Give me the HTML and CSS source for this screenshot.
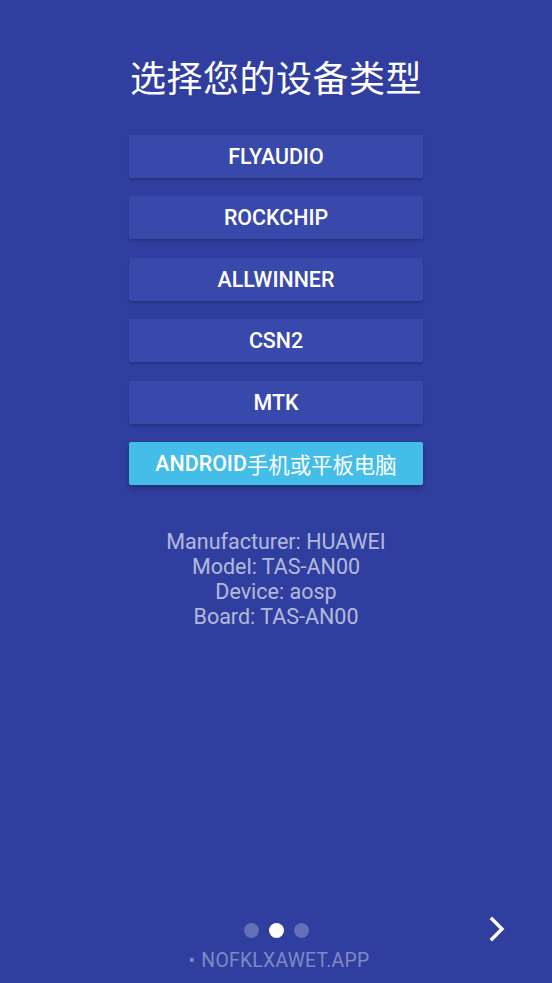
FILE: index.html
```html
<!DOCTYPE html>
<html>
<head>
<meta charset="utf-8">
<link rel="stylesheet" href="styles.css">
</head>
<body>
<div class="page">
  <h1 class="title">选择您的设备类型</h1>
  <div class="choices">
    <div class="btn">FLYAUDIO</div>
    <div class="btn">ROCKCHIP</div>
    <div class="btn">ALLWINNER</div>
    <div class="btn">CSN2</div>
    <div class="btn">MTK</div>
    <div class="btn btn-selected">ANDROID<span class="cjk">手机或平板电脑</span></div>
  </div>
  <div class="info">
    <div>Manufacturer: HUAWEI</div>
    <div>Model: TAS-AN00</div>
    <div>Device: aosp</div>
    <div>Board: TAS-AN00</div>
  </div>
  <div class="footer">
    <div class="nav">
      <div class="dots">
        <span class="dot"></span>
        <span class="dot dot-active"></span>
        <span class="dot"></span>
      </div>
      <svg class="next" width="24" height="28" viewBox="0 0 24 28">
        <path d="M6 4 L16 14 L6 24" fill="none" stroke="#fff" stroke-width="3.4" stroke-linecap="square" stroke-linejoin="miter"/>
      </svg>
    </div>
    <div class="site"><span class="bullet">•</span>NOFKLXAWET.APP</div>
  </div>
</div>
</body>
</html>
```

FILE: styles.css
```css
html, body {
  margin: 0;
  padding: 0;
  background: #303f9f;
}
.page {
  width: 552px;
  height: 983px;
  display: flex;
  flex-direction: column;
  align-items: center;
  font-family: Roboto, "Noto Sans CJK SC", sans-serif;
  color: #fff;
  box-sizing: border-box;
}
.title {
  margin: 55px 0 0;
  font-family: "Noto Sans CJK SC", sans-serif;
  font-weight: 400;
  font-size: 36px;
  line-height: 43px;
  letter-spacing: 0.5px;
}
.choices {
  margin-top: 37px;
  display: flex;
  flex-direction: column;
  gap: 18.4px;
}
.btn {
  width: 294px;
  height: 43px;
  background: #3949ab;
  border-radius: 2px;
  box-shadow: 0 2px 3px rgba(0, 0, 0, 0.22);
  display: flex;
  align-items: center;
  justify-content: center;
  font-family: Roboto, "Noto Sans CJK SC", sans-serif;
  font-weight: 500;
  font-size: 21.4px;
}
.btn-selected {
  background: #44bde8;
  box-shadow: 0 3px 6px rgba(0, 0, 0, 0.3);
}
.cjk {
  font-family: "Noto Sans CJK SC", sans-serif;
  font-weight: 400;
}
.info {
  margin-top: 44px;
  text-align: center;
  font-size: 21.5px;
  line-height: 25px;
  color: rgba(255, 255, 255, 0.65);
}
.footer {
  margin-top: auto;
  width: 100%;
  display: flex;
  flex-direction: column;
  align-items: center;
  padding-bottom: 10px;
}
.nav {
  position: relative;
  width: 100%;
  height: 28px;
  display: flex;
  align-items: center;
  justify-content: center;
}
.dots {
  display: flex;
  gap: 10px;
  margin-bottom: 3px;
}
.dot {
  width: 15px;
  height: 15px;
  border-radius: 50%;
  background: rgba(255, 255, 255, 0.25);
}
.dot-active {
  background: #fff;
}
.next {
  position: absolute;
  right: 42px;
  top: -3px;
}
.site {
  margin-top: 3px;
  font-size: 19.3px;
  line-height: 24px;
  color: rgba(255, 255, 255, 0.4);
  letter-spacing: 0.3px;
  padding-left: 6px;
}
.bullet {
  margin-right: 6px;
}
```
